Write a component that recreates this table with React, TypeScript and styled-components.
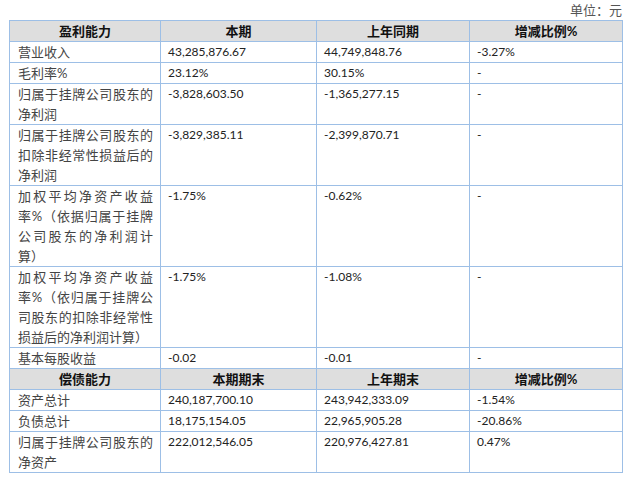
import React from "react";
import styled, { createGlobalStyle } from "styled-components";

const GlobalStyle = createGlobalStyle`
  html, body {
    margin: 0;
    padding: 0;
    background: #fff;
  }
`;

const Page = styled.div`
  width: 613px;
  padding-left: 9px;
  font-family: Lato, "Noto Sans CJK SC", sans-serif;
`;

const Unit = styled.div`
  height: 20px;
  line-height: 20px;
  text-align: right;
  font-size: 13px;
  color: #555;
  font-family: "Noto Sans CJK SC", serif;
`;

const Table = styled.table`
  width: 613px;
  border-collapse: collapse;
  table-layout: fixed;
  border: 1px solid #9dbfe6;
`;

const HeadCell = styled.th`
  background: #dedede;
  border: 1px solid #9dbfe6;
  padding: 0;
  height: 20px;
  line-height: 20px;
  font-size: 13px;
  font-weight: 700;
  color: #111;
  text-align: center;
`;

const Label = styled.td`
  border: 1px solid #9dbfe6;
  padding: 0 7px 0 8px;
  line-height: 20px;
  font-size: 13px;
  color: #444;
  vertical-align: top;
  text-align: justify;
  font-family: Lato, "Noto Sans CJK SC", sans-serif;
`;

const Value = styled.td`
  border: 1px solid #9dbfe6;
  padding: 0 7px;
  line-height: 20px;
  font-size: 12px;
  color: #222;
  vertical-align: top;
  white-space: nowrap;
`;

type Row = [string, string, string, string];

const profit: Row[] = [
  ["营业收入", "43,285,876.67", "44,749,848.76", "-3.27%"],
  ["毛利率%", "23.12%", "30.15%", "-"],
  ["归属于挂牌公司股东的净利润", "-3,828,603.50", "-1,365,277.15", "-"],
  ["归属于挂牌公司股东的扣除非经常性损益后的净利润", "-3,829,385.11", "-2,399,870.71", "-"],
  ["加权平均净资产收益率%（依据归属于挂牌公司股东的净利润计算）", "-1.75%", "-0.62%", "-"],
  ["加权平均净资产收益率%（依归属于挂牌公司股东的扣除非经常性损益后的净利润计算）", "-1.75%", "-1.08%", "-"],
  ["基本每股收益", "-0.02", "-0.01", "-"],
];

const debt: Row[] = [
  ["资产总计", "240,187,700.10", "243,942,333.09", "-1.54%"],
  ["负债总计", "18,175,154.05", "22,965,905.28", "-20.86%"],
  ["归属于挂牌公司股东的净资产", "222,012,546.05", "220,976,427.81", "0.47%"],
];

const Header = ({ cols }: { cols: string[] }) => (
  <tr>
    {cols.map((c) => (
      <HeadCell key={c}>{c}</HeadCell>
    ))}
  </tr>
);

const Body = ({ rows }: { rows: Row[] }) => (
  <>
    {rows.map((r) => (
      <tr key={r[0]}>
        <Label>{r[0]}</Label>
        <Value>{r[1]}</Value>
        <Value>{r[2]}</Value>
        <Value>{r[3]}</Value>
      </tr>
    ))}
  </>
);

export default function App() {
  return (
    <Page>
      <GlobalStyle />
      <Unit>单位：元</Unit>
      <Table>
        <colgroup>
          <col style={{ width: 151 }} />
          <col style={{ width: 156 }} />
          <col style={{ width: 153 }} />
          <col style={{ width: 153 }} />
        </colgroup>
        <tbody>
          <Header cols={["盈利能力", "本期", "上年同期", "增减比例%"]} />
          <Body rows={profit} />
          <Header cols={["偿债能力", "本期期末", "上年期末", "增减比例%"]} />
          <Body rows={debt} />
        </tbody>
      </Table>
    </Page>
  );
}
